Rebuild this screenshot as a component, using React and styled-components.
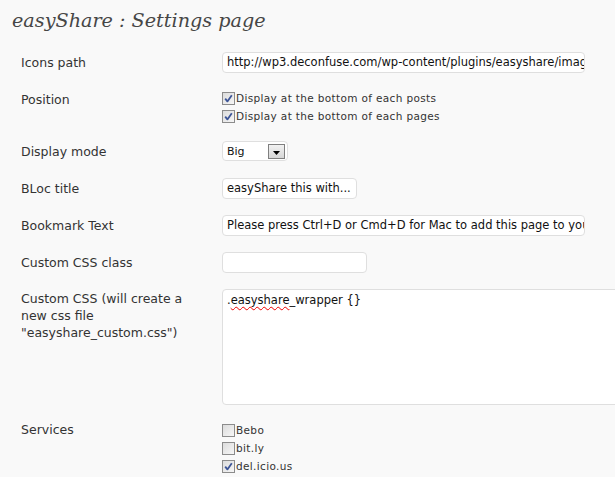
import styled, { createGlobalStyle } from "styled-components";

const GlobalStyle = createGlobalStyle`
  html, body {
    margin: 0;
    padding: 0;
    background: #f9f9f9;
  }
  body {
    font-family: "DejaVu Sans", Verdana, sans-serif;
    color: #333;
    overflow: hidden;
  }
`;

const services = [
  { name: "Bebo", checked: false },
  { name: "bit.ly", checked: false },
  { name: "del.icio.us", checked: true },
];

const CheckMark = () => (
  <svg width="9" height="9" viewBox="0 0 9 9">
    <path d="M1.2 4.6 L3.4 7.4 L7.8 1.2" fill="none" stroke="#3d5597" strokeWidth="1.8" strokeLinejoin="round" />
  </svg>
);

const Checkbox = ({ checked, children }) => (
  <CheckLine>
    <Box>{checked && <CheckMark />}</Box>
    <span>{children}</span>
  </CheckLine>
);

const App = () => {
  return (
    <Page>
      <GlobalStyle />
      <Title>easyShare : Settings page</Title>
      <Form>
        <Row>
          <Label>Icons path</Label>
          <TextBox $width={363}>http://wp3.deconfuse.com/wp-content/plugins/easyshare/images/</TextBox>
        </Row>
        <Row>
          <Label>Position</Label>
          <div>
            <Checkbox checked>Display at the bottom of each posts</Checkbox>
            <Checkbox checked>Display at the bottom of each pages</Checkbox>
          </div>
        </Row>
        <Row>
          <Label>Display mode</Label>
          <Select>
            Big
            <ArrowButton>
              <svg width="7" height="4" viewBox="0 0 7 4">
                <path d="M0 0 H7 L3.5 4 Z" fill="#000" />
              </svg>
            </ArrowButton>
          </Select>
        </Row>
        <Row>
          <Label>BLoc title</Label>
          <TextBox $width={135}>easyShare this with...</TextBox>
        </Row>
        <Row>
          <Label>Bookmark Text</Label>
          <TextBox $width={363}>Please press Ctrl+D or Cmd+D for Mac to add this page to your bookmarks</TextBox>
        </Row>
        <Row>
          <Label>Custom CSS class</Label>
          <TextBox $width={145}></TextBox>
        </Row>
        <Row>
          <Label $multi>Custom CSS (will create a new css file "easyshare_custom.css")</Label>
          <TextArea>
            .<Misspelled>easyshare</Misspelled>_wrapper {"{}"}
          </TextArea>
        </Row>
        <Row>
          <Label $services>Services</Label>
          <div>
            {services.map((s) => (
              <Checkbox key={s.name} checked={s.checked}>
                {s.name}
              </Checkbox>
            ))}
          </div>
        </Row>
      </Form>
    </Page>
  );
};

const Page = styled.div`
  width: 615px;
  height: 477px;
  overflow: hidden;
`;

const Title = styled.h2`
  margin: 0;
  padding: 7px 0 0 12px;
  height: 44px;
  box-sizing: border-box;
  font-family: "DejaVu Serif", Georgia, serif;
  font-style: italic;
  font-weight: normal;
  font-size: 19.2px;
  line-height: 28px;
  color: #464646;
`;

const Form = styled.div`
  display: flex;
  flex-direction: column;
`;

const Row = styled.div`
  display: grid;
  grid-template-columns: 201px 1fr;
  padding: 8px 0 8px 21px;
  align-items: start;
`;

const Label = styled.div`
  font-size: 12.5px;
  line-height: ${(p) => (p.$multi ? "17px" : "21px")};
  padding-top: ${(p) => (p.$multi ? "1px" : "0")};
  margin-top: ${(p) => (p.$services ? "-2px" : "0")};
  color: #333;
  width: ${(p) => (p.$multi ? "175px" : "auto")};
`;

const TextBox = styled.div`
  box-sizing: border-box;
  width: ${(p) => p.$width}px;
  height: 21px;
  background: #fff;
  border: 1px solid #dfdfdf;
  border-radius: 4px;
  padding: 0 4px;
  font-size: 11.5px;
  line-height: 19px;
  color: #111;
  white-space: nowrap;
  overflow: hidden;
`;

const Select = styled.div`
  box-sizing: border-box;
  width: 66px;
  height: 20px;
  background: #fff;
  border: 1px solid #dfdfdf;
  border-radius: 4px;
  padding: 0 2px 0 4px;
  display: flex;
  align-items: center;
  font-size: 11px;
  color: #111;
`;

const ArrowButton = styled.div`
  box-sizing: border-box;
  margin-left: auto;
  width: 17px;
  height: 15px;
  border: 1px solid #7f7f7f;
  background: linear-gradient(#f2f2f2, #d6d6d6);
  display: flex;
  align-items: flex-end;
  justify-content: center;
  padding-bottom: 3px;
`;

const TextArea = styled.div`
  box-sizing: border-box;
  width: 400px;
  height: 116px;
  background: #fff;
  border: 1px solid #dfdfdf;
  border-radius: 4px;
  padding: 2px 4px;
  font-size: 11.5px;
  line-height: 16px;
  color: #111;
`;

const Misspelled = styled.span`
  text-decoration: underline wavy #e00;
  text-decoration-thickness: 1px;
  text-underline-offset: 2px;
`;

const CheckLine = styled.div`
  display: flex;
  align-items: center;
  height: 18px;
  font-size: 10.5px;
  color: #333;
  letter-spacing: 0.35px;
`;

const Box = styled.span`
  box-sizing: border-box;
  width: 13px;
  height: 13px;
  margin-right: 1px;
  border: 1px solid #8c8c8c;
  background: linear-gradient(135deg, #dcdcdc, #f6f6f6);
  display: flex;
  align-items: center;
  justify-content: center;
`;

export default App;
